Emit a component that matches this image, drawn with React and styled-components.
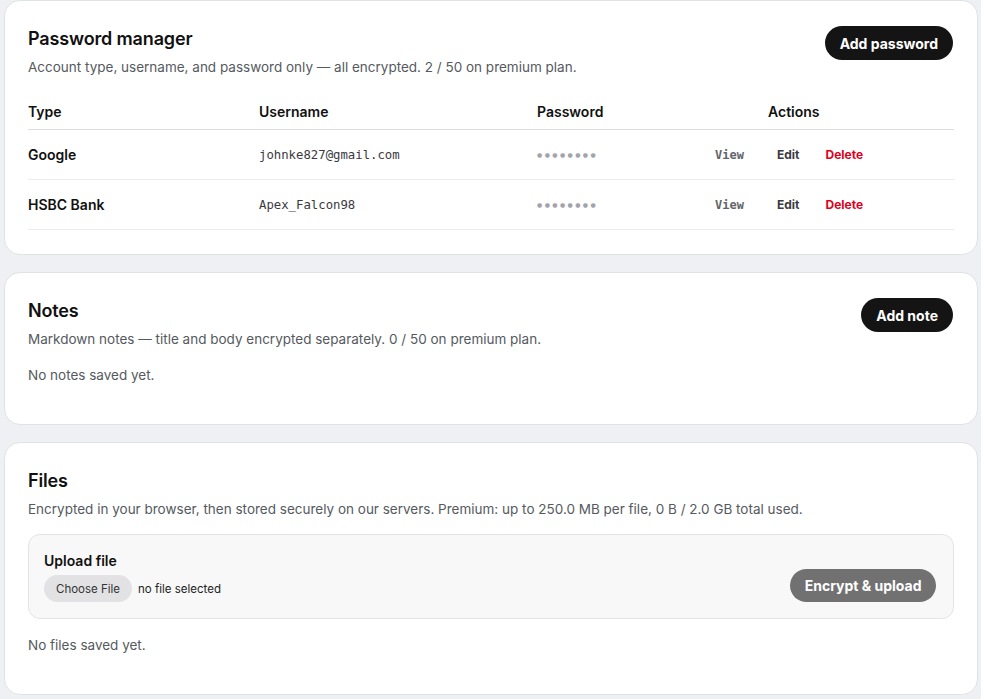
import React from "react";
import styled, { createGlobalStyle } from "styled-components";

const Global = createGlobalStyle`
  * { box-sizing: border-box; }
  html, body { margin: 0; padding: 0; background: #eef0f4; }
  body { font-family: Inter, "Noto Sans", Arial, sans-serif; color: #111; }
`;

const Page = styled.div`
  display: flex;
  flex-direction: column;
  gap: 17px;
  padding: 0 3px 0 4px;
`;

const Card = styled.section`
  background: #fff;
  border: 1px solid #dfe2e6;
  border-radius: 16px;
  padding: 24px 23px;
`;

const Head = styled.div`
  display: flex;
  justify-content: space-between;
  align-items: flex-start;
`;

const TitleBlock = styled.div`
  display: flex;
  flex-direction: column;
  gap: 4px;
`;

const Title = styled.h2`
  margin: 0;
  font-size: 18px;
  line-height: 28px;
  font-weight: 600;
  color: #111;
  letter-spacing: -0.15px;
`;

const Sub = styled.p`
  margin: 0;
  font-size: 13.5px;
  line-height: 20px;
  color: #555a60;
`;

const PillButton = styled.button`
  border: none;
  border-radius: 999px;
  background: ${(p) => (p.$disabled ? "#717171" : "#141414")};
  color: #fff;
  font-family: inherit;
  font-size: 14px;
  font-weight: 700;
  height: ${(p) => (p.$h ? p.$h : 34)}px;
  padding: 0 ${(p) => (p.$disabled ? 14.5 : 15)}px;
  margin-right: ${(p) => (p.$disabled ? 0 : 1)}px;
  cursor: pointer;
  margin-top: 1px;
`;

const Table = styled.div`
  margin-top: 16px;
  display: flex;
  flex-direction: column;
`;

const Row = styled.div`
  display: grid;
  grid-template-columns: 231px 278px 231px 1fr;
  align-items: center;
  height: ${(p) => (p.$header ? 37 : 50)}px;
  border-bottom: 1px solid ${(p) => (p.$header ? "#dcdde0" : "#ececee")};
`;

const HeadCell = styled.div`
  font-size: 14px;
  font-weight: 600;
  color: #111;
`;

const TypeCell = styled.div`
  font-size: 14px;
  font-weight: 600;
  color: #111;
`;

const Mono = styled.div`
  font-family: "DejaVu Sans Mono", "Liberation Mono", monospace;
  font-size: 12.3px;
  color: #3a3a3e;
`;

const PassCell = styled.div`
  display: flex;
  align-items: center;
  justify-content: space-between;
  padding-right: 16px;
`;

const Dots = styled.span`
  font-family: "DejaVu Sans", sans-serif;
  font-size: 6px;
  letter-spacing: 2.4px;
  color: #a3a3ab;
`;

const LinkBtn = styled.button`
  border: none;
  background: none;
  padding: 4px 8px;
  font-family: ${(p) =>
    p.$mono ? `"DejaVu Sans Mono", "Liberation Mono", monospace` : "inherit"};
  font-size: 12px;
  font-weight: ${(p) => (p.$mono ? 600 : 700)};
  color: ${(p) => p.$color || "#333"};
  cursor: pointer;
`;

const Actions = styled.div`
  display: flex;
  align-items: center;
  gap: 10px;
  padding-left: 1px;
`;

const Empty = styled.p`
  margin: 16px 0 15px;
  font-size: 13.5px;
  line-height: 20px;
  color: #555a60;
`;

const UploadBox = styled.div`
  margin-top: 15px;
  background: #f8f8f8;
  border: 1px solid #e4e4e6;
  border-radius: 12px;
  padding: 16px 17px 16px 15px;
  display: flex;
  justify-content: space-between;
  align-items: flex-end;
`;

const UploadField = styled.div`
  display: flex;
  flex-direction: column;
  gap: 4px;
`;

const FieldLabel = styled.label`
  font-size: 14px;
  line-height: 20px;
  font-weight: 600;
  color: #111;
`;

const FileRow = styled.div`
  display: flex;
  align-items: center;
  gap: 6px;
`;

const ChooseBtn = styled.span`
  display: inline-flex;
  align-items: center;
  height: 27px;
  padding: 0 12px;
  border-radius: 999px;
  background: #e2e2e4;
  font-size: 11.5px;
  color: #333;
`;

const FileName = styled.span`
  font-size: 11.5px;
  color: #222;
`;

const passwords = [
  { type: "Google", user: "johnke827@gmail.com" },
  { type: "HSBC Bank", user: "Apex_Falcon98" },
];

export default function App() {
  return (
    <>
      <Global />
      <Page>
        <Card>
          <Head>
            <TitleBlock>
              <Title>Password manager</Title>
              <Sub>
                Account type, username, and password only — all encrypted. 2 / 50 on premium plan.
              </Sub>
            </TitleBlock>
            <PillButton>Add password</PillButton>
          </Head>
          <Table>
            <Row $header>
              <HeadCell>Type</HeadCell>
              <HeadCell>Username</HeadCell>
              <HeadCell>Password</HeadCell>
              <HeadCell>Actions</HeadCell>
            </Row>
            {passwords.map((p) => (
              <Row key={p.type}>
                <TypeCell>{p.type}</TypeCell>
                <Mono>{p.user}</Mono>
                <PassCell>
                  <Dots>●●●●●●●●</Dots>
                  <LinkBtn $mono $color="#63646b">View</LinkBtn>
                </PassCell>
                <Actions>
                  <LinkBtn $color="#3a3a3f">Edit</LinkBtn>
                  <LinkBtn $color="#e0001b">Delete</LinkBtn>
                </Actions>
              </Row>
            ))}
          </Table>
        </Card>

        <Card>
          <Head>
            <TitleBlock>
              <Title>Notes</Title>
              <Sub>Markdown notes — title and body encrypted separately. 0 / 50 on premium plan.</Sub>
            </TitleBlock>
            <PillButton>Add note</PillButton>
          </Head>
          <Empty>No notes saved yet.</Empty>
        </Card>

        <Card>
          <TitleBlock>
            <Title>Files</Title>
            <Sub>
              Encrypted in your browser, then stored securely on our servers. Premium: up to 250.0 MB per file, 0 B / 2.0 GB total used.
            </Sub>
          </TitleBlock>
          <UploadBox>
            <UploadField>
              <FieldLabel>Upload file</FieldLabel>
              <FileRow>
                <ChooseBtn>Choose File</ChooseBtn>
                <FileName>no file selected</FileName>
              </FileRow>
            </UploadField>
            <PillButton $disabled $h={33}>Encrypt &amp; upload</PillButton>
          </UploadBox>
          <Empty>No files saved yet.</Empty>
        </Card>
      </Page>
    </>
  );
}
